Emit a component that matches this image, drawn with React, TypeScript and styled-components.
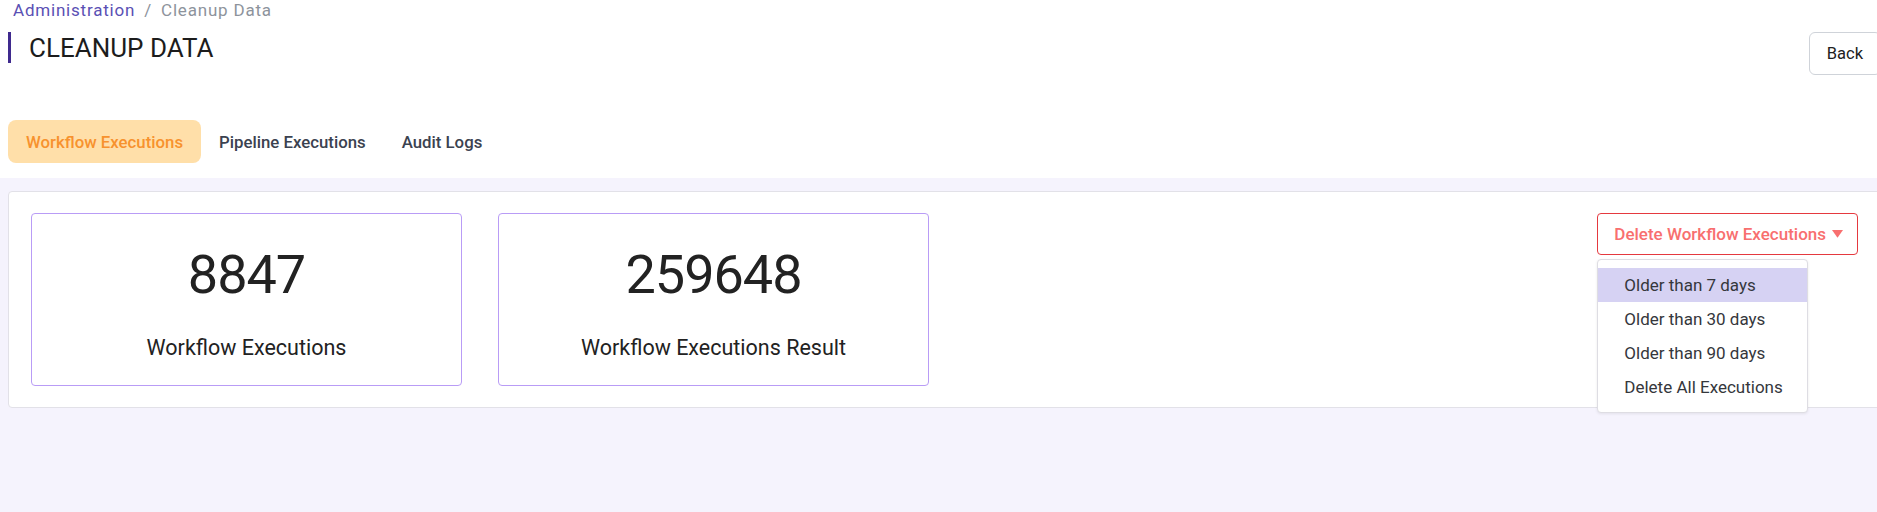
import * as React from 'react';
import styled, { createGlobalStyle } from 'styled-components';

const GlobalStyle = createGlobalStyle`
	html, body {
		margin: 0;
		padding: 0;
		background: #ffffff;
		overflow: hidden;
	}
	body {
		font-family: Roboto, 'Noto Sans', Arial, sans-serif;
		color: #212121;
	}
	* {
		box-sizing: border-box;
	}
`;

const menuItems = ['Older than 7 days', 'Older than 30 days', 'Older than 90 days', 'Delete All Executions'];

const stats = [
	{ value: '8847', label: 'Workflow Executions' },
	{ value: '259648', label: 'Workflow Executions Result' },
];

const tabs = ['Workflow Executions', 'Pipeline Executions', 'Audit Logs'];

export default function App() {
	const [activeTab, setActiveTab] = React.useState(0);

	return (
		<Page>
			<GlobalStyle />
			<Header>
				<Breadcrumb>
					<Crumb href="#">Administration</Crumb>
					<Separator>/</Separator>
					<Current>Cleanup Data</Current>
				</Breadcrumb>

				<TitleRow>
					<Title>CLEANUP DATA</Title>
					<BackButton>Back</BackButton>
				</TitleRow>

				<Tabs>
					{tabs.map((tab, i) => (
						<Tab key={tab} $active={i === activeTab} onClick={() => setActiveTab(i)}>
							{tab}
						</Tab>
					))}
				</Tabs>
			</Header>

			<Main>
				<Panel>
					<Cards>
						{stats.map((s) => (
							<StatCard key={s.label}>
								<StatValue>{s.value}</StatValue>
								<StatLabel>{s.label}</StatLabel>
							</StatCard>
						))}
					</Cards>

					<Dropdown>
						<DeleteButton>
							Delete Workflow Executions
							<Caret viewBox="0 0 10 8">
								<path d="M0 0h10L5 7z" fill="currentColor" />
							</Caret>
						</DeleteButton>
						<Menu>
							{menuItems.map((item, i) => (
								<MenuItem key={item} $highlighted={i === 0}>
									{item}
								</MenuItem>
							))}
						</Menu>
					</Dropdown>
				</Panel>
			</Main>
		</Page>
	);
}

const Page = styled.div`
	width: 1889px;
	min-height: 512px;
	display: flex;
	flex-direction: column;
`;

const Header = styled.header`
	background: #ffffff;
	padding: 0 8px 15px;
`;

const Breadcrumb = styled.nav`
	display: flex;
	align-items: center;
	height: 20px;
	padding-left: 5px;
	font-size: 17px;
	letter-spacing: 0.8px;
	line-height: 20px;
`;

const Crumb = styled.a`
	color: #5a50b4;
	text-decoration: none;
`;

const Separator = styled.span`
	color: #8d939c;
	padding: 0 9px;
`;

const Current = styled.span`
	color: #8d939c;
`;

const TitleRow = styled.div`
	display: flex;
	justify-content: space-between;
	align-items: flex-start;
	margin-top: 12px;
`;

const Title = styled.h1`
	margin: 0;
	height: 31px;
	display: flex;
	align-items: center;
	border-left: 3px solid #3f2a8e;
	padding-left: 18px;
	font-size: 26px;
	font-weight: 400;
	color: #1c1c1c;
`;

const BackButton = styled.button`
	height: 43px;
	padding: 0 17px;
	background: #ffffff;
	border: 1px solid #cfd3d9;
	border-radius: 6px;
	font-family: inherit;
	font-size: 16.5px;
	color: #212121;
	cursor: pointer;
`;

const Tabs = styled.div`
	display: flex;
	margin-top: 45px;
`;

const Tab = styled.button<{ $active: boolean }>`
	height: 43px;
	padding: 0 18px;
	border: none;
	border-radius: 8px;
	background: ${({ $active }) => ($active ? '#ffdfa9' : 'transparent')};
	color: ${({ $active }) => ($active ? '#f7922e' : '#3b4250')};
	font-family: inherit;
	font-size: 16.8px;
	font-weight: 500;
	cursor: pointer;
`;

const Main = styled.main`
	flex: 1;
	background: #f5f3fd;
	padding: 13px 8px;
`;

const Panel = styled.section`
	display: flex;
	justify-content: space-between;
	align-items: flex-start;
	background: #ffffff;
	border: 1px solid #e2e1e8;
	border-radius: 4px;
	padding: 21px 22px;
`;

const Cards = styled.div`
	display: flex;
	gap: 36px;
`;

const StatCard = styled.div`
	width: 431px;
	height: 173px;
	display: flex;
	flex-direction: column;
	align-items: center;
	border: 1px solid #b99cf6;
	border-radius: 4px;
	padding-top: 34px;
`;

const StatValue = styled.div`
	font-size: 54px;
	letter-spacing: -1px;
	line-height: 1;
	color: #222222;
`;

const StatLabel = styled.div`
	margin-top: 35px;
	font-size: 21.5px;
	line-height: 1;
	color: #222222;
`;

const Dropdown = styled.div`
	position: relative;
`;

const DeleteButton = styled.button`
	display: flex;
	align-items: center;
	gap: 6px;
	height: 42px;
	padding: 0 14px 0 16px;
	background: #ffffff;
	border: 1px solid #e5393f;
	border-radius: 4px;
	color: #f86f6f;
	font-family: inherit;
	font-size: 17px;
	font-weight: 500;
	cursor: pointer;
`;

const Caret = styled.svg`
	width: 11px;
	height: 9px;
`;

const Menu = styled.ul`
	position: absolute;
	top: 46px;
	left: 0;
	width: 211px;
	margin: 0;
	padding: 8px 0;
	list-style: none;
	background: #ffffff;
	border: 1px solid #dedde3;
	border-radius: 4px;
	box-shadow: 0 1px 3px rgba(0, 0, 0, 0.08);
	z-index: 10;
`;

const MenuItem = styled.li<{ $highlighted: boolean }>`
	height: 34px;
	display: flex;
	align-items: center;
	padding-left: 26px;
	font-size: 17px;
	color: #35373c;
	background: ${({ $highlighted }) => ($highlighted ? '#d6d2f3' : 'transparent')};
	cursor: pointer;
`;
